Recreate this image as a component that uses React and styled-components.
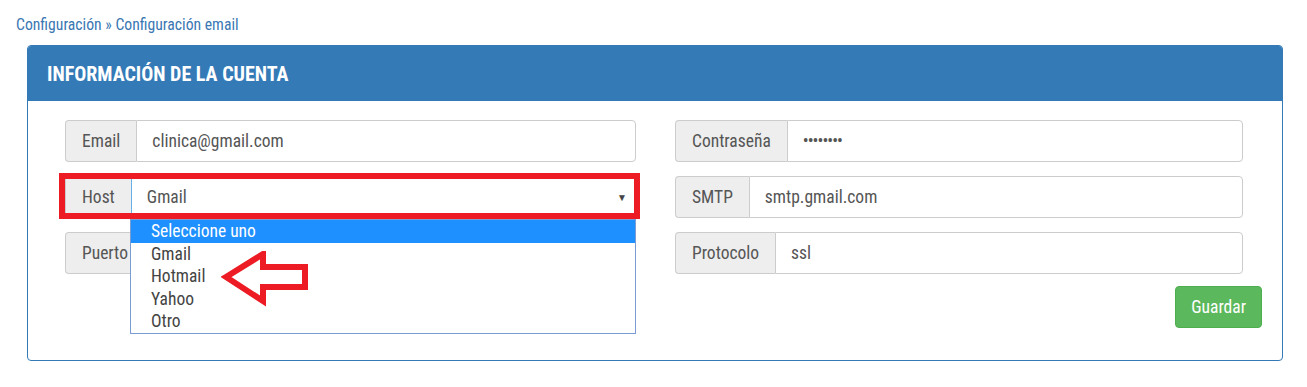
import React from 'react';
import styled, { createGlobalStyle } from 'styled-components';

const GlobalStyle = createGlobalStyle`
  body {
    margin: 0;
    background: #fff;
    font-family: "Roboto Condensed", Roboto, "Liberation Sans", sans-serif;
    color: #333;
  }
`;

const Page = styled.div`
  width: 1307px;
  height: 387px;
  overflow: hidden;
`;

const Breadcrumb = styled.div`
  padding: 14px 0 0 16px;
  height: 45px;
  box-sizing: border-box;
  font-size: 15.7px;
  line-height: 22px;
  color: #3a77b3;
`;

const Panel = styled.div`
  margin: 0 24px 0 27px;
  border: 1px solid #337ab7;
  border-radius: 4px;
`;

const PanelHeading = styled.div`
  height: 55px;
  display: flex;
  align-items: center;
  padding: 0 19px;
  background: #337ab7;
  color: #fff;
  font-size: 20px;
  font-weight: 700;
  border-radius: 3px 3px 0 0;
`;

const PanelBody = styled.div`
  display: grid;
  grid-template-columns: 590px 587px;
  column-gap: 20px;
  padding: 19px 20px 32px 37px;
`;

const Column = styled.div`
  display: flex;
  flex-direction: column;
  gap: 14px;
`;

const InputGroup = styled.div`
  position: relative;
  display: flex;
  height: 42px;
  margin-right: 19px;
  font-size: 17.5px;
`;

const Addon = styled.span`
  display: flex;
  align-items: center;
  padding: 0 16px;
  background: #eee;
  border: 1px solid #ccc;
  border-right: 0;
  border-radius: 4px 0 0 4px;
  color: #555;
`;

const Field = styled.div`
  flex: 1;
  display: flex;
  align-items: center;
  padding: 0 15px;
  border: 1px solid ${(p) => (p.focus ? '#66afe9' : '#ccc')};
  border-radius: 0 4px 4px 0;
  color: #555;
  letter-spacing: ${(p) => (p.dots ? '-1px' : '0')};
`;

const Caret = styled.span`
  margin-left: auto;
  margin-right: -7px;
  font-size: 10px;
  color: #444;
`;

const Options = styled.ul`
  position: absolute;
  top: 43px;
  left: ${(p) => p.offset}px;
  right: 0;
  margin: 0;
  padding: 0;
  list-style: none;
  background: #fff;
  border: 1px solid #7a9cd3;
  z-index: 2;
`;

const Option = styled.li`
  height: 22.6px;
  line-height: 22.6px;
  padding: 0 20px;
  font-size: 17.5px;
  color: ${(p) => (p.active ? '#fff' : '#444')};
  background: ${(p) => (p.active ? '#1e90ff' : 'transparent')};
`;

const Highlight = styled.div`
  position: absolute;
  top: -3px;
  bottom: -1px;
  left: -6px;
  right: -4px;
  border: 6px solid #ed1c24;
  pointer-events: none;
  z-index: 3;
`;

const ArrowMark = styled.svg`
  position: absolute;
  left: 156px;
  top: 75px;
  z-index: 4;
`;

const Actions = styled.div`
  display: flex;
  justify-content: flex-end;
  margin-top: -2px;
`;

const Button = styled.button`
  height: 42px;
  padding: 0 15px;
  font-family: inherit;
  font-size: 17.5px;
  color: #fff;
  background: #5cb85c;
  border: 1px solid #4cae4c;
  border-radius: 4px;
`;

const hosts = ['Seleccione uno', 'Gmail', 'Hotmail', 'Yahoo', 'Otro'];

export default function App() {
  return (
    <Page>
      <GlobalStyle />
      <Breadcrumb>Configuración » Configuración email</Breadcrumb>
      <Panel>
        <PanelHeading>INFORMACIÓN DE LA CUENTA</PanelHeading>
        <PanelBody>
          <Column>
            <InputGroup>
              <Addon>Email</Addon>
              <Field>clinica@gmail.com</Field>
            </InputGroup>
            <InputGroup>
              <Addon>Host</Addon>
              <Field focus>
                Gmail
                <Caret>▼</Caret>
              </Field>
              <Options offset={65}>
                {hosts.map((h, i) => (
                  <Option key={h} active={i === 0}>{h}</Option>
                ))}
              </Options>
              <Highlight />
              <ArrowMark width="90" height="56" viewBox="0 0 90 56">
                <polygon
                  points="5,26 42,3 42,16 84,16 84,36 42,36 42,50"
                  fill="none"
                  stroke="#ed1c24"
                  strokeWidth="6"
                  strokeLinejoin="miter"
                />
              </ArrowMark>
            </InputGroup>
            <InputGroup>
              <Addon>Puerto</Addon>
              <Field />
            </InputGroup>
          </Column>
          <Column>
            <InputGroup>
              <Addon>Contraseña</Addon>
              <Field dots>••••••••</Field>
            </InputGroup>
            <InputGroup>
              <Addon>SMTP</Addon>
              <Field>smtp.gmail.com</Field>
            </InputGroup>
            <InputGroup>
              <Addon>Protocolo</Addon>
              <Field>ssl</Field>
            </InputGroup>
            <Actions>
              <Button>Guardar</Button>
            </Actions>
          </Column>
        </PanelBody>
      </Panel>
    </Page>
  );
}
